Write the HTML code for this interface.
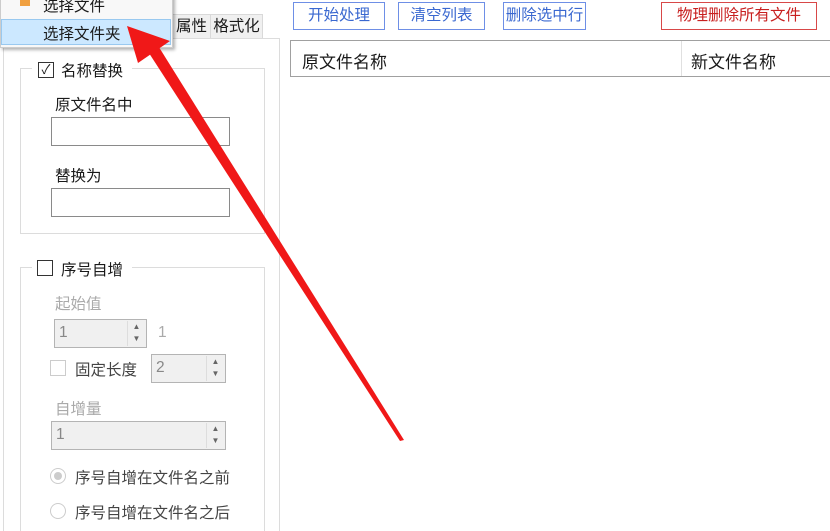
<!DOCTYPE html>
<html><head><meta charset="utf-8"><style>
*{box-sizing:border-box;margin:0;padding:0}
html{overflow:hidden;width:830px;height:531px}
body{width:830px;height:531px;overflow:hidden;background:#fff;position:relative;font-family:"Liberation Sans","Noto Sans CJK SC",sans-serif;font-size:15.5px;color:#1a1a1a}
.a{position:absolute}
.btn{position:absolute;top:2px;height:28px;border:1.5px solid #6e8fe6;color:#3a68d0;text-align:center;line-height:25px;font-size:15.5px;background:#fff}
.tb{position:absolute;border:1px solid #8a8a8a;background:#fff}
.dis{background:#f0f0f0;border:1px solid #b4b4b4;color:#888}
.sp{position:absolute;right:1px;top:1px;bottom:1px;width:18px;border-left:1px solid #ddd;font-size:8px;color:#666;text-align:center;line-height:12px}
.gray{color:#aaa}
</style></head><body>
<div class="a" style="left:172px;top:14px;width:39px;height:25px;border:1px solid #d9d9d9;background:#f0f0f0;text-align:center;line-height:24px">属性</div>
<div class="a" style="left:210px;top:14px;width:53px;height:25px;border:1px solid #d9d9d9;background:#f0f0f0;text-align:center;line-height:24px">格式化</div>
<div class="a" style="left:3px;top:38px;width:277px;height:500px;border:1px solid #dcdcdc;border-bottom:none"></div>
<div class="a" style="left:20px;top:68px;width:245px;height:166px;border:1px solid #dcdcdc"></div>
<div class="a" style="left:32px;top:58px;width:100px;height:22px;background:#fff"></div>
<div class="a" style="left:38px;top:62px;width:16px;height:16px;border:1px solid #333;font-size:13px;line-height:14px;text-align:center">✓</div>
<div class="a" style="left:61px;top:59px">名称替换</div>
<div class="a" style="left:55px;top:93px">原文件名中</div>
<div class="tb" style="left:51px;top:117px;width:179px;height:29px"></div>
<div class="a" style="left:55px;top:164px">替换为</div>
<div class="tb" style="left:51px;top:188px;width:179px;height:29px"></div>
<div class="a" style="left:20px;top:267px;width:245px;height:280px;border:1px solid #dcdcdc"></div>
<div class="a" style="left:32px;top:257px;width:100px;height:22px;background:#fff"></div>
<div class="a" style="left:37px;top:260px;width:16px;height:16px;border:1px solid #333;background:#fff"></div>
<div class="a" style="left:61px;top:258px">序号自增</div>
<div class="a gray" style="left:55px;top:292px">起始值</div>
<div class="tb dis" style="left:54px;top:319px;width:93px;height:29px;padding:4px 4px">1<div class="sp">▲<br>▼</div></div>
<div class="a gray" style="left:158px;top:324px">1</div>
<div class="a" style="left:50px;top:360px;width:16px;height:16px;border:1px solid #ccc"></div>
<div class="a" style="left:75px;top:358px;color:#444">固定长度</div>
<div class="tb dis" style="left:151px;top:354px;width:75px;height:29px;padding:4px 4px">2<div class="sp">▲<br>▼</div></div>
<div class="a gray" style="left:55px;top:397px">自增量</div>
<div class="tb dis" style="left:51px;top:421px;width:175px;height:29px;padding:4px 4px">1<div class="sp">▲<br>▼</div></div>
<div class="a" style="left:50px;top:468px;width:16px;height:16px;border:1px solid #ccc;border-radius:50%"><div class="a" style="left:3px;top:3px;width:8px;height:8px;border-radius:50%;background:#ccc"></div></div>
<div class="a" style="left:75px;top:466px;color:#444">序号自增在文件名之前</div>
<div class="a" style="left:50px;top:503px;width:16px;height:16px;border:1px solid #ccc;border-radius:50%"></div>
<div class="a" style="left:75px;top:501px;color:#444">序号自增在文件名之后</div>
<div class="btn" style="left:293px;width:92px">开始处理</div>
<div class="btn" style="left:398px;width:87px">清空列表</div>
<div class="btn" style="left:503px;width:83px">删除选中行</div>
<div class="btn" style="left:661px;width:156px;border-color:#d84848;color:#c82020">物理删除所有文件</div>
<div class="a" style="left:290px;top:40px;width:545px;height:37px;border:1px solid #a0a0a0;border-right:none"></div>
<div class="a" style="left:681px;top:41px;width:1px;height:35px;background:#e0e0e0"></div>
<div class="a" style="left:302px;top:48px;font-size:17px">原文件名称</div>
<div class="a" style="left:691px;top:48px;font-size:17px">新文件名称</div>
<div class="a" style="left:0;top:-10px;width:173px;height:58px;background:#f8f8f8;border:1px solid #ccc;box-shadow:2px 2px 3px rgba(0,0,0,.3)"></div>
<div class="a" style="left:20px;top:0;width:10px;height:6px;background:#f0a040"></div>
<div class="a" style="left:43px;top:-6px">选择文件</div>
<div class="a" style="left:1px;top:19px;width:170px;height:26px;background:#cce8ff;border:1px solid #99c9f0"></div>
<div class="a" style="left:43px;top:22px">选择文件夹</div>
<svg class="a" style="left:0;top:0" width="830" height="531">
<polygon points="147,50 157,44 404,440 400,441" fill="#f01818"/>
<polygon points="127,26 170,41 138,63" fill="#f01818"/>
</svg>
</body></html>
